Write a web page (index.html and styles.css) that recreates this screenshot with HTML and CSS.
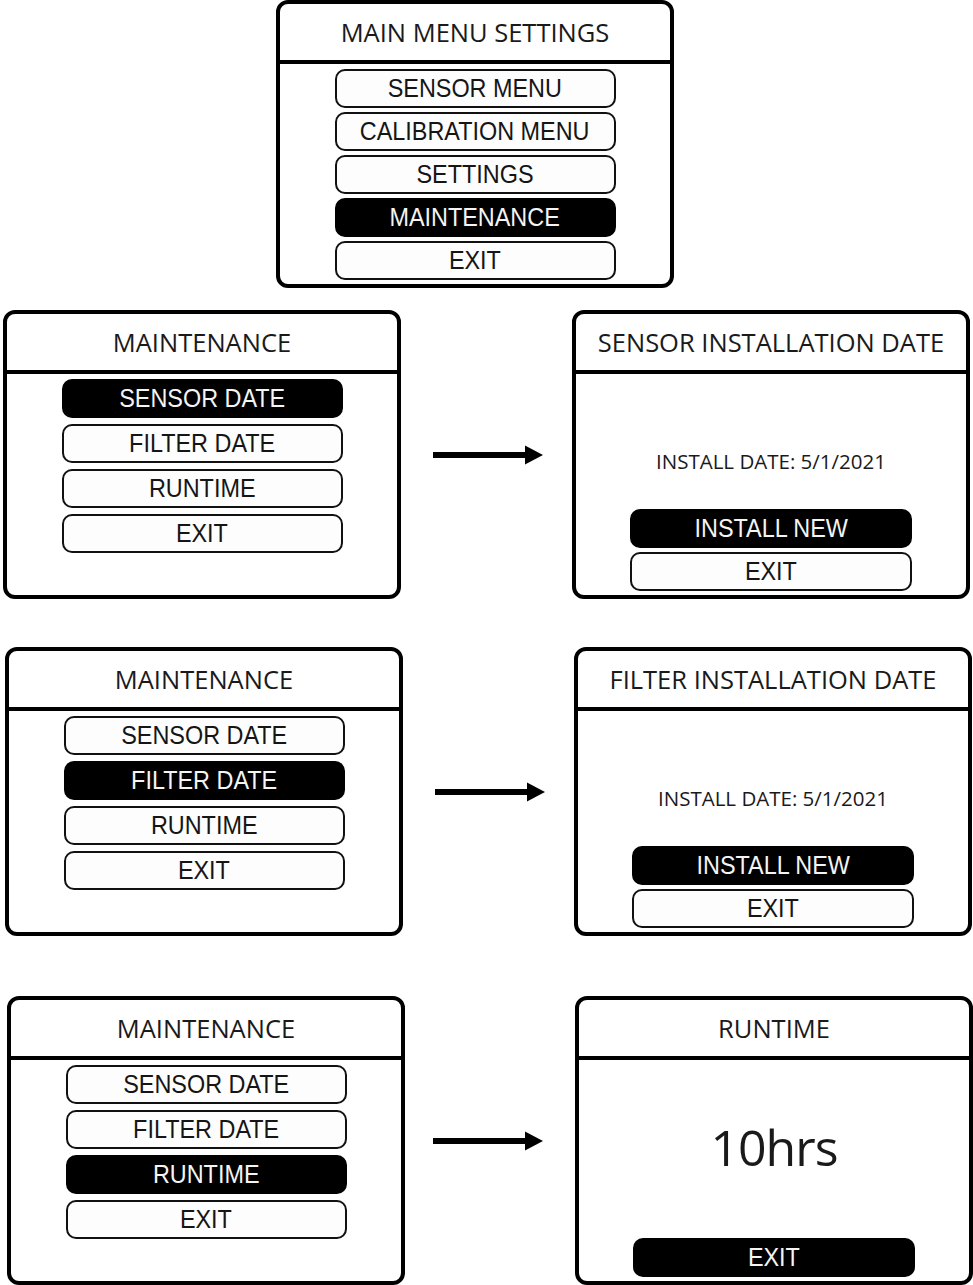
FILE: index.html
```html
<!DOCTYPE html>
<html lang="en">
<head>
    <meta charset="UTF-8">
    <meta name="viewport" content="width=device-width, initial-scale=1.0">
    <title>Maintenance Menu Flow</title>
    <link rel="stylesheet" href="styles.css">
</head>
<body>
    <div class="sheet">

        <!-- Menu principal -->
        <div class="row row-top">
            <section class="screen screen-main">
                <div class="screen-head">MAIN MENU SETTINGS</div>
                <div class="screen-body">
                    <div class="menu menu-tight">
                        <div class="btn"><span>SENSOR MENU</span></div>
                        <div class="btn"><span>CALIBRATION MENU</span></div>
                        <div class="btn"><span>SETTINGS</span></div>
                        <div class="btn is-active"><span>MAINTENANCE</span></div>
                        <div class="btn"><span>EXIT</span></div>
                    </div>
                </div>
            </section>
        </div>

        <!-- Fecha del sensor -->
        <div class="row row-1">
            <section class="screen">
                <div class="screen-head">MAINTENANCE</div>
                <div class="screen-body">
                    <div class="menu">
                        <div class="btn is-active"><span>SENSOR DATE</span></div>
                        <div class="btn"><span>FILTER DATE</span></div>
                        <div class="btn"><span>RUNTIME</span></div>
                        <div class="btn"><span>EXIT</span></div>
                    </div>
                </div>
            </section>
            <svg class="arrow" width="110" height="20" viewBox="0 0 110 20">
                <rect x="0" y="7" width="94" height="6" fill="#000"/>
                <polygon points="92,0.5 110,10 92,19.5" fill="#000"/>
            </svg>
            <section class="screen">
                <div class="screen-head">SENSOR INSTALLATION DATE</div>
                <div class="screen-body">
                    <p class="readout">INSTALL DATE: 5/1/2021</p>
                    <div class="actions">
                        <div class="btn is-active"><span>INSTALL NEW</span></div>
                        <div class="btn"><span>EXIT</span></div>
                    </div>
                </div>
            </section>
        </div>

        <!-- Fecha del filtro -->
        <div class="row row-2">
            <section class="screen">
                <div class="screen-head">MAINTENANCE</div>
                <div class="screen-body">
                    <div class="menu">
                        <div class="btn"><span>SENSOR DATE</span></div>
                        <div class="btn is-active"><span>FILTER DATE</span></div>
                        <div class="btn"><span>RUNTIME</span></div>
                        <div class="btn"><span>EXIT</span></div>
                    </div>
                </div>
            </section>
            <svg class="arrow" width="110" height="20" viewBox="0 0 110 20">
                <rect x="0" y="7" width="94" height="6" fill="#000"/>
                <polygon points="92,0.5 110,10 92,19.5" fill="#000"/>
            </svg>
            <section class="screen">
                <div class="screen-head">FILTER INSTALLATION DATE</div>
                <div class="screen-body">
                    <p class="readout">INSTALL DATE: 5/1/2021</p>
                    <div class="actions">
                        <div class="btn is-active"><span>INSTALL NEW</span></div>
                        <div class="btn"><span>EXIT</span></div>
                    </div>
                </div>
            </section>
        </div>

        <!-- Tiempo de uso -->
        <div class="row row-3">
            <section class="screen">
                <div class="screen-head">MAINTENANCE</div>
                <div class="screen-body">
                    <div class="menu">
                        <div class="btn"><span>SENSOR DATE</span></div>
                        <div class="btn"><span>FILTER DATE</span></div>
                        <div class="btn is-active"><span>RUNTIME</span></div>
                        <div class="btn"><span>EXIT</span></div>
                    </div>
                </div>
            </section>
            <svg class="arrow arrow-last" width="110" height="20" viewBox="0 0 110 20">
                <rect x="0" y="7" width="94" height="6" fill="#000"/>
                <polygon points="92,0.5 110,10 92,19.5" fill="#000"/>
            </svg>
            <section class="screen">
                <div class="screen-head">RUNTIME</div>
                <div class="screen-body">
                    <p class="readout readout-big">10hrs</p>
                    <div class="actions">
                        <div class="btn is-active"><span>EXIT</span></div>
                    </div>
                </div>
            </section>
        </div>

    </div>
</body>
</html>
```

FILE: styles.css
```css
/* Estilos generales */
* {
    box-sizing: border-box;
    margin: 0;
    padding: 0;
}

body {
    background: #fff;
    color: #1a1a1a;
    font-family: "Open Sans", "Liberation Sans", sans-serif;
}

.sheet {
    width: 973px;
}

/* Filas */
.row {
    display: flex;
    align-items: center;
}

.row-top {
    padding-left: 276px;
}

.row-1 {
    margin-top: 22px;
    padding-left: 3px;
}

.row-2 {
    margin-top: 48px;
    padding-left: 5px;
}

.row-3 {
    margin-top: 60px;
    padding-left: 7px;
}

.arrow {
    flex: none;
    margin: 0 29px 0 32px;
}

.arrow-last {
    margin: 0 32px 0 28px;
}

/* Pantallas */
.screen {
    width: 398px;
    height: 289px;
    border: 4px solid #000;
    border-radius: 12px;
    display: flex;
    flex-direction: column;
    flex: none;
    background: #fff;
}

.screen-main {
    height: 288px;
}

.screen-head {
    height: 60px;
    border-bottom: 4px solid #000;
    display: flex;
    align-items: center;
    justify-content: center;
    font-size: 25.5px;
    color: #1a1a1a;
    white-space: nowrap;
}

.screen-body {
    flex: 1;
    display: flex;
    flex-direction: column;
    align-items: center;
    padding-bottom: 4px;
}

/* Menus */
.menu {
    display: flex;
    flex-direction: column;
    gap: 6px;
    margin-top: 5px;
}

.menu-tight {
    gap: 4px;
}

.btn {
    width: 281px;
    height: 39px;
    border: 2px solid #111;
    border-radius: 10px;
    background: #fdfdfd;
    display: flex;
    align-items: center;
    justify-content: center;
    font-family: "Liberation Sans", Arial, sans-serif;
    font-size: 26px;
    color: #151515;
}

.btn span {
    display: inline-block;
    transform: scaleX(0.9);
    white-space: nowrap;
}

.btn.is-active {
    background: #000;
    border-color: #000;
    color: #f4f4f4;
}

/* Lecturas */
.readout {
    margin-top: 73px;
    font-size: 20.5px;
    line-height: 28px;
    color: #1a1a1a;
}

.readout-big {
    margin-top: 56px;
    font-size: 50px;
    line-height: 62px;
    letter-spacing: -1px;
}

.actions {
    margin-top: auto;
    display: flex;
    flex-direction: column;
    gap: 4px;
}

.actions .btn {
    width: 282px;
}
```
